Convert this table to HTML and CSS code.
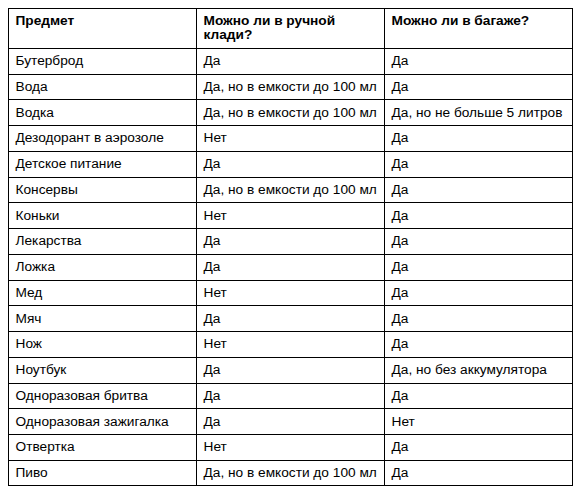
FILE: index.html
```html
<!DOCTYPE html>
<html lang="ru">
<head>
<meta charset="utf-8">
<title>Что можно брать</title>
<link rel="stylesheet" href="styles.css">
</head>
<body>
<table class="rules">
<thead>
<tr><th>Предмет</th><th>Можно ли в ручной клади?</th><th>Можно ли в багаже?</th></tr>
</thead>
<tbody>
<tr><td>Бутерброд</td><td>Да</td><td>Да</td></tr>
<tr><td>Вода</td><td>Да, но в емкости до 100 мл</td><td>Да</td></tr>
<tr><td>Водка</td><td>Да, но в емкости до 100 мл</td><td>Да, но не больше 5 литров</td></tr>
<tr><td>Дезодорант в аэрозоле</td><td>Нет</td><td>Да</td></tr>
<tr><td>Детское питание</td><td>Да</td><td>Да</td></tr>
<tr><td>Консервы</td><td>Да, но в емкости до 100 мл</td><td>Да</td></tr>
<tr><td>Коньки</td><td>Нет</td><td>Да</td></tr>
<tr><td>Лекарства</td><td>Да</td><td>Да</td></tr>
<tr><td>Ложка</td><td>Да</td><td>Да</td></tr>
<tr><td>Мед</td><td>Нет</td><td>Да</td></tr>
<tr><td>Мяч</td><td>Да</td><td>Да</td></tr>
<tr><td>Нож</td><td>Нет</td><td>Да</td></tr>
<tr><td>Ноутбук</td><td>Да</td><td>Да, но без аккумулятора</td></tr>
<tr><td>Одноразовая бритва</td><td>Да</td><td>Да</td></tr>
<tr><td>Одноразовая зажигалка</td><td>Да</td><td>Нет</td></tr>
<tr><td>Отвертка</td><td>Нет</td><td>Да</td></tr>
<tr><td>Пиво</td><td>Да, но в емкости до 100 мл</td><td>Да</td></tr>
</tbody>
</table>
</body>
</html>
```
FILE: styles.css
```css
html, body {
  background: #fff;
}
body {
  margin: 8px;
  font-family: "Liberation Sans", Arial, sans-serif;
  font-size: 13.7px;
  color: #000;
}
.rules {
  width: 100%;
  border-collapse: collapse;
  table-layout: fixed;
}
.rules th,
.rules td {
  border: 1px solid #000;
  padding: 5.26px 3px 5.26px 6.5px;
  text-align: left;
  vertical-align: top;
  line-height: 14.24px;
}
.rules td {
  white-space: nowrap;
}
.rules th {
  font-weight: bold;
}
```
